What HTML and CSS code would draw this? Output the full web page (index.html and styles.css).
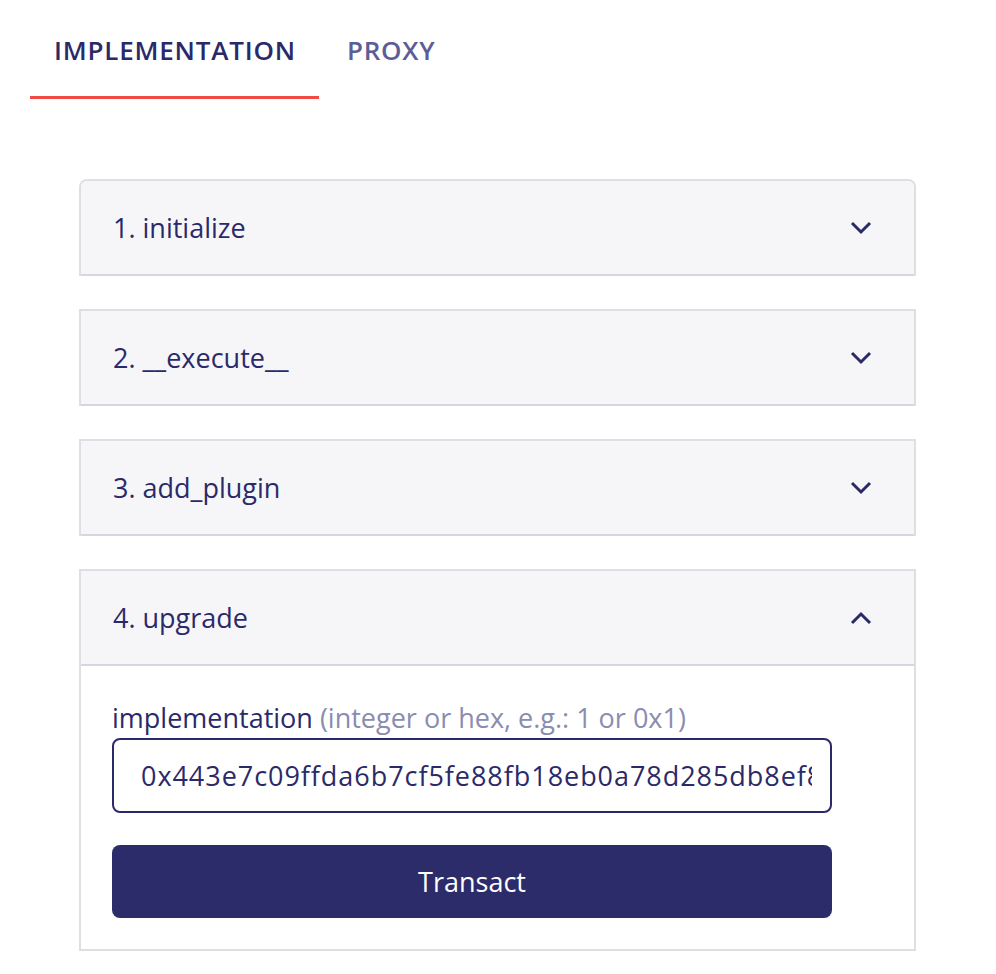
FILE: index.html
```html
<!DOCTYPE html>
<html lang="en">
<head>
<meta charset="utf-8">
<title>Contract</title>
<link rel="stylesheet" href="styles.css">
</head>
<body>
<nav class="tabs">
  <div class="tab tab-active">IMPLEMENTATION</div>
  <div class="tab">PROXY</div>
</nav>
<main class="panels">
  <section class="panel panel-first">
    <div class="panel-head">
      <span class="panel-title">1. initialize</span>
      <svg class="chev" width="22" height="14" viewBox="0 0 22 14"><path d="M2 2 L11 11 L20 2" fill="none" stroke="#2b2a69" stroke-width="3"/></svg>
    </div>
  </section>
  <section class="panel">
    <div class="panel-head">
      <span class="panel-title">2. __execute__</span>
      <svg class="chev" width="22" height="14" viewBox="0 0 22 14"><path d="M2 2 L11 11 L20 2" fill="none" stroke="#2b2a69" stroke-width="3"/></svg>
    </div>
  </section>
  <section class="panel">
    <div class="panel-head">
      <span class="panel-title">3. add_plugin</span>
      <svg class="chev" width="22" height="14" viewBox="0 0 22 14"><path d="M2 2 L11 11 L20 2" fill="none" stroke="#2b2a69" stroke-width="3"/></svg>
    </div>
  </section>
  <section class="panel panel-open">
    <div class="panel-head">
      <span class="panel-title">4. upgrade</span>
      <svg class="chev" width="22" height="14" viewBox="0 0 22 14"><path d="M2 12 L11 3 L20 12" fill="none" stroke="#2b2a69" stroke-width="3"/></svg>
    </div>
    <div class="panel-body">
      <label class="field-label">implementation <span class="hint">(integer or hex, e.g.: 1 or 0x1)</span></label>
      <input class="field-input" type="text" value="0x443e7c09ffda6b7cf5fe88fb18eb0a78d285db8ef8a1c3d9e2f04b6a7c1d2e3f">
      <button class="btn" type="button">Transact</button>
    </div>
  </section>
</main>
</body>
</html>
```

FILE: styles.css
```css
* { box-sizing: border-box; }
body {
  margin: 0;
  background: #ffffff;
  font-family: "Open Sans", "Noto Sans", sans-serif;
  color: #2b2a69;
}
.tabs {
  display: flex;
  padding-left: 30px;
  gap: 4px;
}
.tab {
  height: 99px;
  padding: 4px 23px 0 24px;
  display: flex;
  align-items: center;
  font-size: 26px;
  font-weight: 600;
  letter-spacing: 0.8px;
  color: #5b5e96;
  border-bottom: 3px solid transparent;
}
.tab-active {
  color: #2b2a69;
  border-bottom-color: #ef4a45;
}
.panels {
  margin: 80px 0 0 79px;
  width: 837px;
  display: flex;
  flex-direction: column;
  gap: 33px;
}
.panel {
  border: 2px solid #dfdfe3;
  border-bottom: none;
  background: #ffffff;
}
.panel-first {
  border-radius: 8px 8px 0 0;
}
.panel-first .panel-head {
  border-radius: 6px 6px 0 0;
}
.panel-head {
  height: 95px;
  background: #f6f6f9;
  border-bottom: 2px solid #d6d6e1;
  display: flex;
  align-items: center;
  justify-content: space-between;
  padding: 0 42px 0 32px;
}
.panel-title {
  font-size: 27px;
  color: #2b2a69;
}
.panel-open {
  border-bottom: 2px solid #dfdfe3;
}
.panel-body {
  padding: 32px 82px 31px 31px;
  display: flex;
  flex-direction: column;
}
.field-label {
  font-size: 27px;
  line-height: 40px;
  color: #2b2a69;
}
.hint {
  color: #8a8cb0;
}
.field-input {
  height: 75px;
  width: 720px;
  border: 2px solid #2b2a69;
  border-radius: 8px;
  padding: 0 18px 0 27px;
  font-family: "Open Sans", "Noto Sans", sans-serif;
  font-size: 27px;
  letter-spacing: 0.95px;
  color: #2b2a69;
  outline: none;
}
.btn {
  margin-top: 32px;
  height: 73px;
  width: 720px;
  border: none;
  border-radius: 8px;
  background: #2d2c6b;
  color: #ffffff;
  font-family: "Open Sans", "Noto Sans", sans-serif;
  font-size: 27px;
}
```
